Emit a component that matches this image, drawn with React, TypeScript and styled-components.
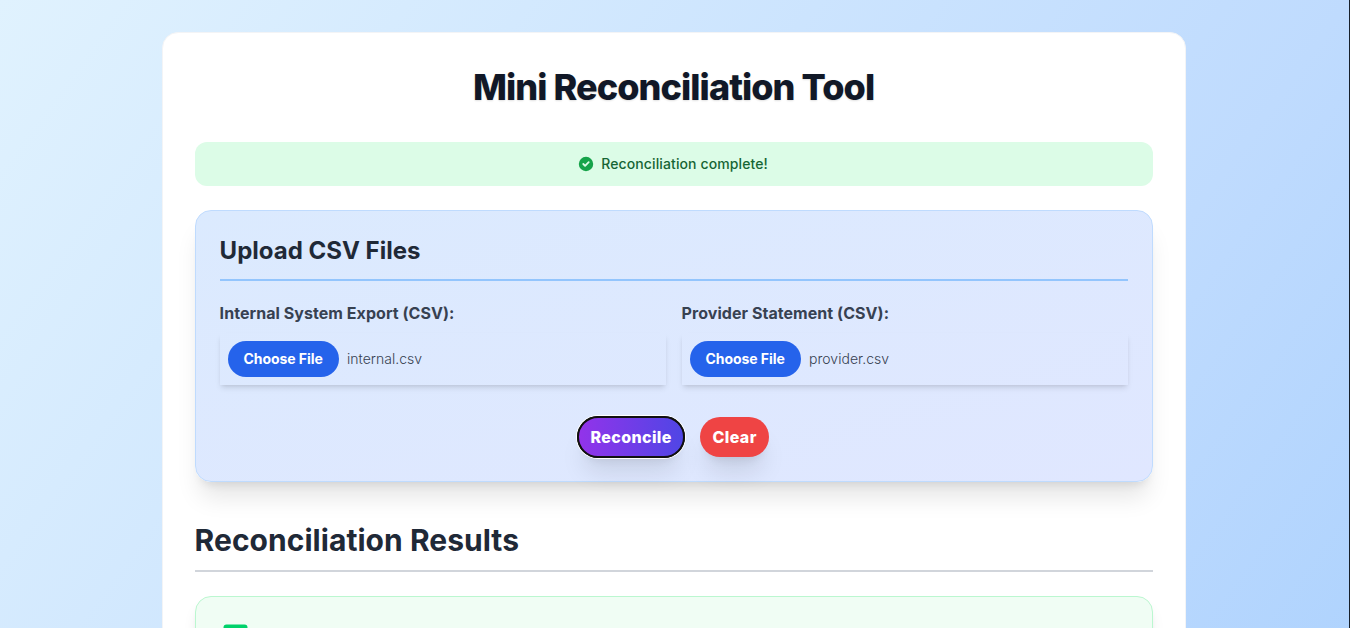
import React from "react";
import styled, { createGlobalStyle } from "styled-components";

const GlobalStyle = createGlobalStyle`
  *, *::before, *::after { box-sizing: border-box; }
  html { background: #17202b; }
  body {
    margin: 0;
    height: 628px;
    overflow: hidden;
    font-family: Inter, "Liberation Sans", sans-serif;
    line-height: 1.5;
    color: #1f2937;
  }
  h1, h2, p { margin: 0; }
`;

const Page = styled.div`
  width: 1349px;
  height: 628px;
  overflow: hidden;
  padding: 32px 0;
  background: linear-gradient(to bottom right, #e0f2fe, #bfdbfe, #93c5fd) 0 0 / 1349px 1850px no-repeat;
`;

const Card = styled.main`
  width: 1024px;
  margin: 0 auto 0 161.6px;
  padding: 32px;
  background: #fff;
  border: 1px solid #f3f4f6;
  border-radius: 16px;
`;

const Title = styled.h1`
  margin-bottom: 33px;
  font-size: 36px;
  line-height: 44px;
  font-weight: 800;
  letter-spacing: -0.92px;
  text-align: center;
  color: #111827;
  text-shadow: 0 1px 2px rgba(0, 0, 0, 0.12);
`;

const Banner = styled.div`
  display: flex;
  align-items: center;
  justify-content: center;
  gap: 6px;
  height: 44px;
  margin-bottom: 24px;
  padding: 12px 14px 12px 12px;
  border-radius: 12px;
  background: #dcfce7;
  color: #166534;
  font-size: 14px;
  line-height: 20px;
  font-weight: 500;
  letter-spacing: 0.11px;

  svg {
    width: 18px;
    height: 18px;
    fill: #16a34a;
  }
`;

const UploadPanel = styled.section`
  margin-bottom: 40px;
  padding: 24px;
  border: 1px solid #bfdbfe;
  border-radius: 16px;
  background: linear-gradient(to bottom right, #dbeafe, #e0e7ff);
  box-shadow: 0 20px 25px -5px rgba(0, 0, 0, 0.1), 0 8px 10px -6px rgba(0, 0, 0, 0.1);
`;

const PanelTitle = styled.h2`
  margin-bottom: 20px;
  padding-bottom: 12px;
  border-bottom: 2px solid #93c5fd;
  font-size: 24px;
  line-height: 32px;
  font-weight: 700;
`;

const Fields = styled.div`
  display: grid;
  grid-template-columns: 1fr 1fr;
  gap: 16px;
  margin-bottom: 32px;
`;

const Field = styled.div`
  display: flex;
  flex-direction: column;
  gap: 8px;
`;

const Label = styled.span`
  font-size: 16px;
  line-height: 24px;
  font-weight: 700;
  letter-spacing: 0.05px;
  color: #374151;
`;

const FilePicker = styled.div`
  display: flex;
  align-items: center;
  gap: 8.4px;
  padding: 8px;
  font-size: 14px;
  line-height: 20px;
  color: #374151;
  font-weight: 350;
  letter-spacing: 0.03px;
  box-shadow: 0 4px 6px -1px rgba(0, 0, 0, 0.1), 0 2px 4px -2px rgba(0, 0, 0, 0.1);
`;

const ChooseButton = styled.button`
  width: 111px;
  height: 36px;
  padding: 8px 0;
  border: 0;
  border-radius: 18px;
  background: #2563eb;
  color: #fff;
  font: 700 14px/20px Inter, sans-serif;
  letter-spacing: -0.05px;
`;

const Actions = styled.div`
  display: flex;
  justify-content: center;
  gap: 16px;
`;

const ActionButton = styled.button<{ $primary?: boolean }>`
  width: ${({ $primary }) => ($primary ? 106 : 69)}px;
  height: 40px;
  padding: 8px 0;
  border: 0;
  border-radius: 20px;
  background: ${({ $primary }) =>
    $primary ? "linear-gradient(to right, #9333ea, #4f46e5)" : "#ef4444"};
  color: #fff;
  font: 800 16px/24px Inter, sans-serif;
  letter-spacing: 0.4px;
  box-shadow: ${({ $primary }) => ($primary ? "0 0 0 1px #101010, 0 0 0 2px #fff, " : "")}
    0 20px 25px -5px rgba(0, 0, 0, 0.1), 0 8px 10px -6px rgba(0, 0, 0, 0.1);
  ${({ $primary }) => $primary && "outline: 2px solid #101010; outline-offset: -1px;"}
`;

const ResultsTitle = styled.h2`
  margin-bottom: 24px;
  padding-bottom: 12px;
  border-bottom: 2px solid #d1d5db;
  font-size: 30px;
  line-height: 36px;
  font-weight: 700;
  letter-spacing: 0.04px;
`;

const MatchPanel = styled.section`
  min-height: 240px;
  padding: 27px;
  border: 1px solid #bbf7d0;
  border-radius: 16px;
  background: #f0fdf4;
  box-shadow: 0 10px 15px -3px rgba(0, 0, 0, 0.1), 0 4px 6px -4px rgba(0, 0, 0, 0.1);
`;

const CheckTile = styled.svg`
  display: block;
  width: 26px;
  height: 26px;
`;

const files = [
  { label: "Internal System Export (CSV):", name: "internal.csv" },
  { label: "Provider Statement (CSV):", name: "provider.csv" },
];

export default function App() {
  return (
    <>
      <GlobalStyle />
      <Page>
        <Card>
          <Title>Mini Reconciliation Tool</Title>
          <Banner>
            <svg viewBox="0 0 20 20">
              <path
                fillRule="evenodd"
                clipRule="evenodd"
                d="M10 18a8 8 0 100-16 8 8 0 000 16zm3.707-9.293a1 1 0 00-1.414-1.414L9 10.586 7.707 9.293a1 1 0 00-1.414 1.414l2 2a1 1 0 001.414 0l4-4z"
              />
            </svg>
            <span>Reconciliation complete!</span>
          </Banner>
          <UploadPanel>
            <PanelTitle>Upload CSV Files</PanelTitle>
            <Fields>
              {files.map((file) => (
                <Field key={file.name}>
                  <Label>{file.label}</Label>
                  <FilePicker>
                    <ChooseButton type="button">Choose File</ChooseButton>
                    <span>{file.name}</span>
                  </FilePicker>
                </Field>
              ))}
            </Fields>
            <Actions>
              <ActionButton type="button" $primary>Reconcile</ActionButton>
              <ActionButton type="button">Clear</ActionButton>
            </Actions>
          </UploadPanel>
          <ResultsTitle>Reconciliation Results</ResultsTitle>
          <MatchPanel>
            <CheckTile viewBox="0 0 26 26">
              <rect x="0.5" y="0.4" width="24" height="24" rx="3" fill="#00d26a" />
              <path d="M7 13l4 4 8-9" fill="none" stroke="#fff" strokeWidth="2.5" strokeLinecap="round" />
            </CheckTile>
          </MatchPanel>
        </Card>
      </Page>
    </>
  );
}
